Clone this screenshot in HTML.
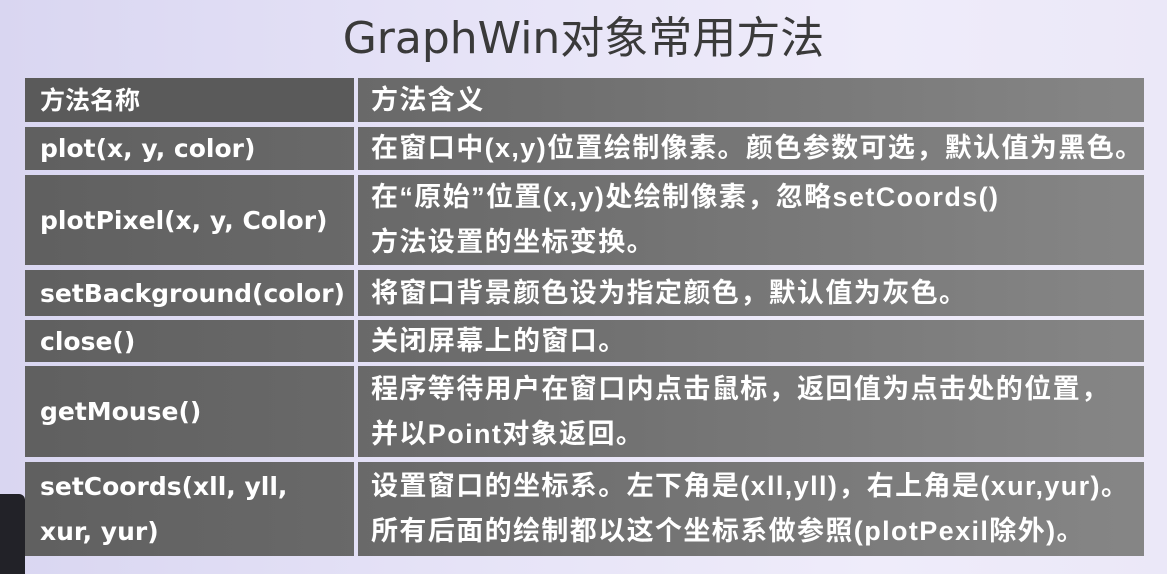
<!DOCTYPE html>
<html><head><meta charset="utf-8"><style>
body{margin:0;width:1167px;height:574px;overflow:hidden;position:relative;
background:linear-gradient(90deg,#d9d6f1 0%,#e6e3f7 40%,#efecfa 75%,#ebe8f8 100%);
font-family:"DejaVu Sans","Noto Sans CJK SC",sans-serif;}
.t{position:absolute;top:2px;left:0;width:1167px;text-align:center;font-size:44px;color:#3a3a3a;font-family:"DejaVu Sans","Noto Sans CJK SC",sans-serif;}
.c{position:absolute;color:#fff;font-weight:bold;font-size:25px;box-sizing:border-box;padding-left:15px;display:flex;flex-direction:column;justify-content:center;line-height:45px;white-space:nowrap;
background:linear-gradient(90deg,#5f5f5f 0px,#6d6d6d 500px,#858585 1120px);background-attachment:fixed;}
.l{left:25px;width:329px;letter-spacing:0}
.r{left:358px;width:786px;font-size:27px;padding-left:13px;letter-spacing:1.4px;font-family:"Liberation Sans","Noto Sans CJK SC",sans-serif}
.blk{position:absolute;left:0;top:494px;width:25px;height:80px;background:#222228;border-radius:0 6px 0 0}
</style></head><body>
<div class="t">GraphWin对象常用方法</div>
<div class="c l" style="top:78px;height:44px;background:#5a5a5a">方法名称</div>
<div class="c r" style="top:78px;height:44px">方法含义</div>
<div class="c l" style="top:127px;height:43px">plot(x, y, color)</div>
<div class="c r" style="top:127px;height:43px">在窗口中(x,y)位置绘制像素。颜色参数可选，默认值为黑色。</div>
<div class="c l" style="top:175px;height:90px">plotPixel(x, y, Color)</div>
<div class="c r" style="top:175px;height:90px"><div>在“原始”位置(x,y)处绘制像素，忽略setCoords()</div><div>方法设置的坐标变换。</div></div>
<div class="c l" style="top:270px;height:46px">setBackground(color)</div>
<div class="c r" style="top:270px;height:46px">将窗口背景颜色设为指定颜色，默认值为灰色。</div>
<div class="c l" style="top:320px;height:42px">close()</div>
<div class="c r" style="top:320px;height:42px">关闭屏幕上的窗口。</div>
<div class="c l" style="top:366px;height:91px">getMouse()</div>
<div class="c r" style="top:366px;height:91px"><div>程序等待用户在窗口内点击鼠标，返回值为点击处的位置，</div><div>并以Point对象返回。</div></div>
<div class="c l" style="top:462px;height:94px"><div>setCoords(xll, yll,</div><div>xur, yur)</div></div>
<div class="c r" style="top:462px;height:94px"><div>设置窗口的坐标系。左下角是(xll,yll)，右上角是(xur,yur)。</div><div>所有后面的绘制都以这个坐标系做参照(plotPexil除外)。</div></div>
<div class="blk"></div>
</body></html>
